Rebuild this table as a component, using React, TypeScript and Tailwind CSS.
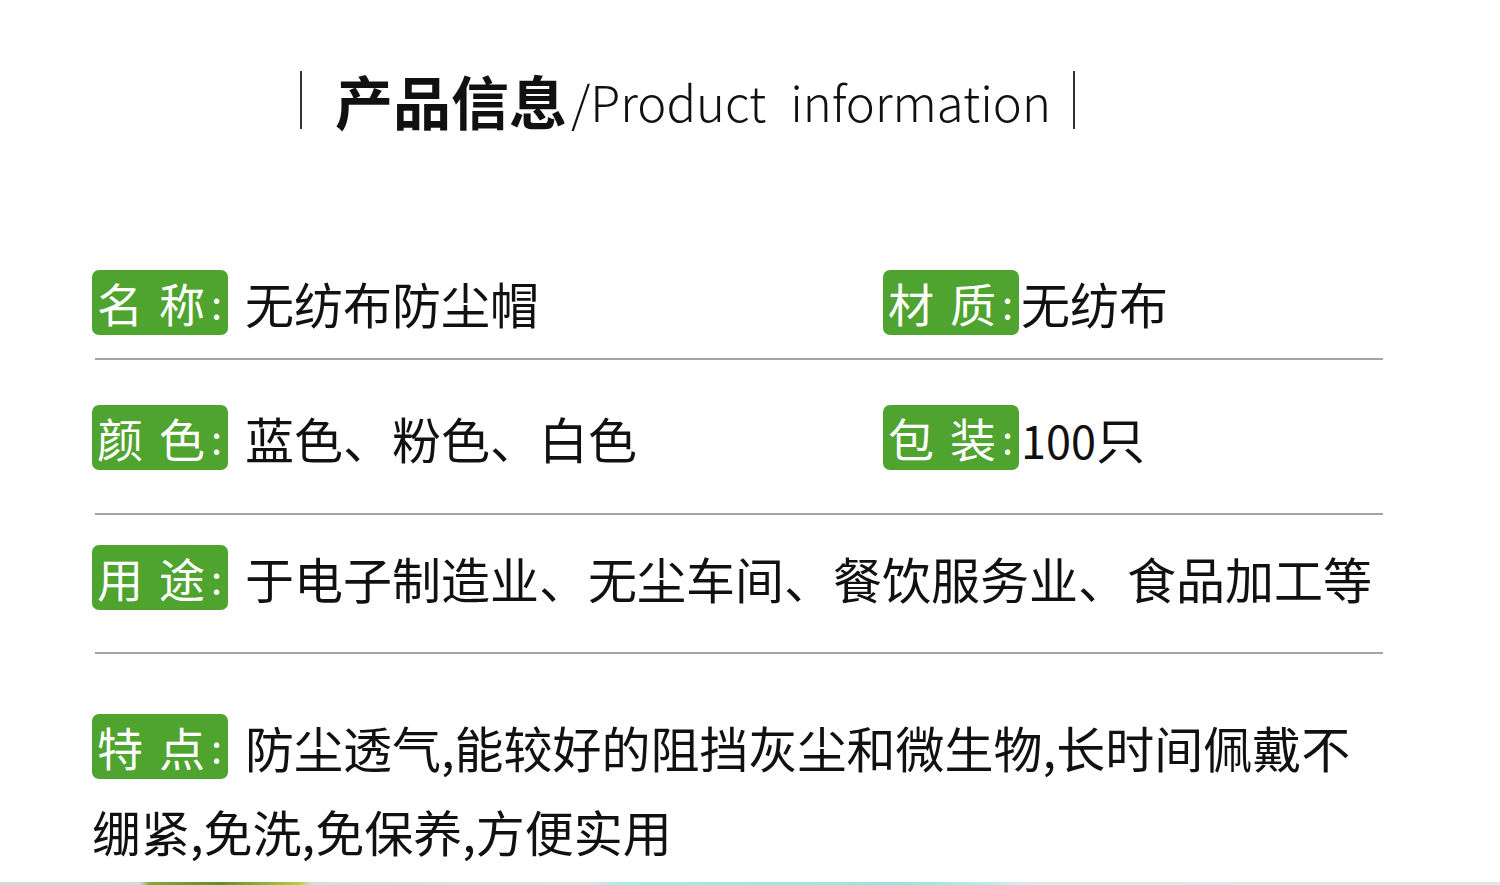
import React from "react";

const FONT = '"Noto Sans CJK SC", "Noto Sans", sans-serif';

function Tag({ a, b }: { a: string; b: string }) {
  return (
    <span className="inline-flex h-[65px] w-[136px] shrink-0 items-center rounded-[7px] bg-[#4fa32f] pl-[5px] align-middle text-[46px] font-normal leading-[65px] text-white">
      <span>{a}</span>
      <span className="ml-[16px]">{b}</span>
      <span className="ml-[6px] text-[40px]">:</span>
    </span>
  );
}

function Divider() {
  return <div className="ml-[3px] h-[2px] w-[1288px] bg-[#a3a3a3]" />;
}

export default function App() {
  return (
    <div
      className="flex h-[885px] w-[1500px] flex-col overflow-hidden bg-white text-[#111]"
      style={{ fontFamily: FONT }}
    >
      {/* Title */}
      <div className="mt-[71px] flex h-[58px] items-center pl-[300px]">
        <div className="h-[58px] w-[2px] bg-[#333]" />
        <span className="ml-[33px] text-[58px] font-bold leading-none text-[#111]">产品信息</span>
        <span className="ml-[4px] text-[49px] font-extralight leading-none text-[#111]">
          /Product<span className="ml-[24px]">information</span>
        </span>
        <div className="ml-[22px] h-[58px] w-[2px] bg-[#333]" />
      </div>

      <div className="ml-[92px] mt-[141px] flex w-[1293px] flex-col">
        {/* Row 1 */}
        <div className="flex h-[65px] items-center">
          <div className="flex w-[791px] items-center">
            <Tag a="名" b="称" />
            <span className="ml-[17px] text-[49px] leading-none">无纺布防尘帽</span>
          </div>
          <div className="flex items-center">
            <Tag a="材" b="质" />
            <span className="ml-[2px] text-[49px] leading-none">无纺布</span>
          </div>
        </div>
        <div className="mt-[23px]">
          <Divider />
        </div>

        {/* Row 2 */}
        <div className="mt-[45px] flex h-[65px] items-center">
          <div className="flex w-[791px] items-center">
            <Tag a="颜" b="色" />
            <span className="ml-[17px] text-[49px] leading-none">蓝色、粉色、白色</span>
          </div>
          <div className="flex items-center">
            <Tag a="包" b="装" />
            <span className="ml-[2px] text-[49px] leading-none">
              <span className="text-[45px]">100</span>只
            </span>
          </div>
        </div>
        <div className="mt-[43px]">
          <Divider />
        </div>

        {/* Row 3 */}
        <div className="mt-[30px] flex h-[65px] items-center">
          <Tag a="用" b="途" />
          <span className="ml-[17px] whitespace-nowrap text-[49px] leading-none">
            于电子制造业、无尘车间、餐饮服务业、食品加工等
          </span>
        </div>
        <div className="mt-[42px]">
          <Divider />
        </div>

        {/* Row 4 */}
        <div className="mt-[60px] flex h-[65px] items-center">
          <Tag a="特" b="点" />
          <span className="ml-[17px] whitespace-nowrap text-[49px] leading-none">
            防尘透气,能较好的阻挡灰尘和微生物,长时间佩戴不
          </span>
        </div>
        <div className="mt-[19px] text-[49px] leading-[65px]">绷紧,免洗,免保养,方便实用</div>
      </div>

      <div className="mt-auto h-[3px] w-full bg-[linear-gradient(to_right,#d9d9d9_0px,#d6d8d4_140px,#7fa83a_150px,#5f8f2a_220px,#b4d040_300px,#d8dcd4_310px,#dfe3e6_590px,#a6ecea_620px,#8fe6e4_900px,#bdeeef_1000px,#e2e6ec_1020px,#e4e6ec_1500px)]" />
    </div>
  );
}
